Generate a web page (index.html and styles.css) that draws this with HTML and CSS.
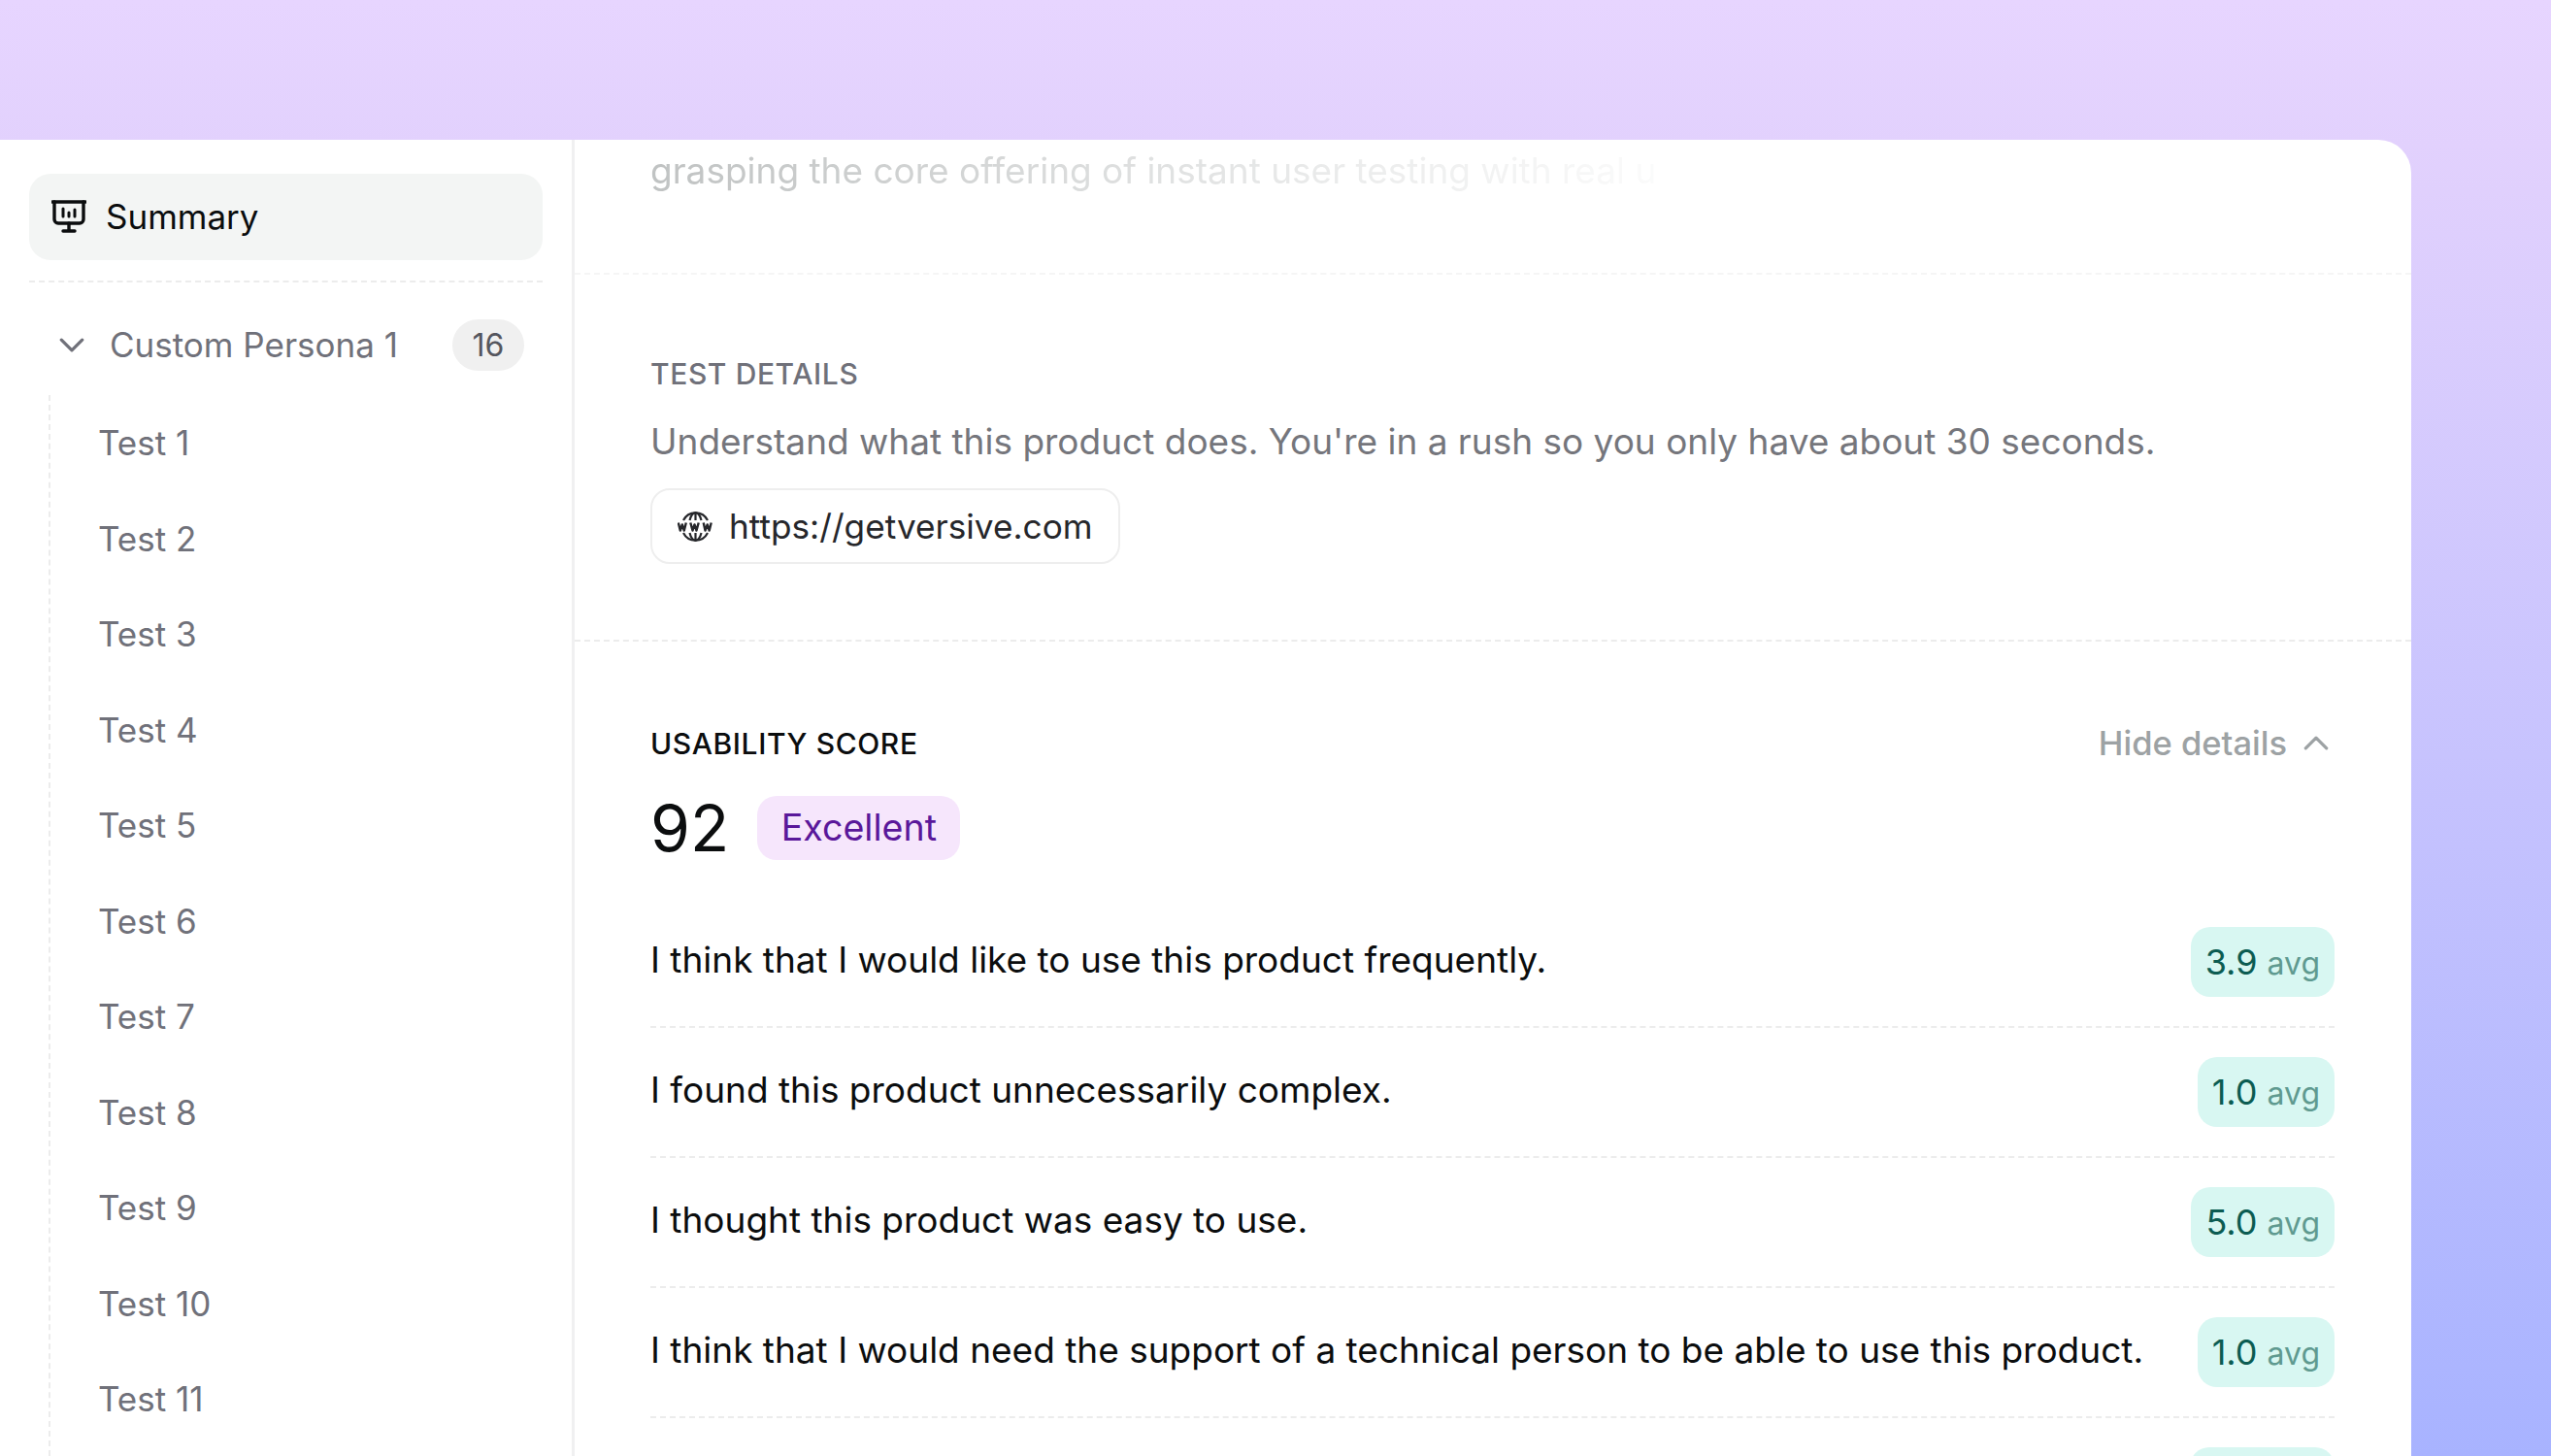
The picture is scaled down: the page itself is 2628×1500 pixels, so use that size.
FILE: index.html
```html
<!DOCTYPE html>
<html lang="en">
<head>
  <meta charset="UTF-8" />
  <meta name="viewport" content="width=device-width, initial-scale=1.0"/>
  <title>Test results</title>
  <link rel="stylesheet" href="styles.css">
</head>
<body>

  <div class="window">
    <aside class="sidebar">
      <div class="summary">
        <svg class="summary-icon" viewBox="0 0 36 36" fill="none" stroke="currentColor" stroke-width="3.4" stroke-linecap="round" stroke-linejoin="round">
          <path d="M1 3h34"/>
          <path d="M3 3v18a4 4 0 0 0 4 4h22a4 4 0 0 0 4-4V3"/>
          <path d="M18 25v7"/>
          <path d="M12 33h12"/>
          <path d="M12 10v8M18 14v4M24 11v7" stroke-width="3"/>
        </svg>
        <span>Summary</span>
      </div>

      <div class="persona">
        <svg class="persona-chevron" viewBox="0 0 24 14" fill="none" stroke="currentColor" stroke-width="3" stroke-linecap="round" stroke-linejoin="round">
          <path d="M2 2l10 10 10-10"/>
        </svg>
        <span class="persona-name">Custom Persona 1</span>
        <span class="persona-count">16</span>
      </div>

      <div class="tests">
        <div class="test">Test 1</div>
        <div class="test">Test 2</div>
        <div class="test">Test 3</div>
        <div class="test">Test 4</div>
        <div class="test">Test 5</div>
        <div class="test">Test 6</div>
        <div class="test">Test 7</div>
        <div class="test">Test 8</div>
        <div class="test">Test 9</div>
        <div class="test">Test 10</div>
        <div class="test">Test 11</div>
      </div>
    </aside>

    <main class="main">
      <section class="intro">
        <p class="intro-text">grasping the core offering of instant user testing with real u</p>
      </section>

      <section class="details">
        <h2 class="label label-muted">TEST DETAILS</h2>
        <p class="details-text">Understand what this product does. You're in a rush so you only have about 30 seconds.</p>
        <div class="url">
          <svg class="url-icon" viewBox="0 0 37 31" fill="none" stroke="currentColor" stroke-width="2.2" stroke-linejoin="round">
            <path d="M6 9a14 14 0 0 1 25 0"/>
            <path d="M12.5 9C13.5 5 16 1.5 18.5 1.2 21 1.5 23.5 5 24.5 9"/>
            <path d="M18.5 1v8"/>
            <path d="M6 22a14 14 0 0 0 25 0"/>
            <path d="M12.5 22c1 4 3.5 7.5 6 7.8 2.5-.3 5-3.8 6-7.8"/>
            <path d="M18.5 22v8"/>
            <path d="M.8 11.5l2 8 2-6 2 6 2-8M13.3 11.5l2.2 8 2-6 2 6 2.2-8M26.7 11.5l1.8 8 2.2-6 2 6 2-8" stroke-width="2.4"/>
          </svg>
          <span>https://getversive.com</span>
        </div>
      </section>

      <section class="score">
        <div class="score-head">
          <h2 class="label">USABILITY SCORE</h2>
          <div class="toggle">
            <span>Hide details</span>
            <svg class="toggle-chevron" viewBox="0 0 24 14" fill="none" stroke="currentColor" stroke-width="3" stroke-linecap="round" stroke-linejoin="round">
              <path d="M2 12l10-10 10 10"/>
            </svg>
          </div>
        </div>

        <div class="score-value">
          <span class="score-number">92</span>
          <span class="score-tag">Excellent</span>
        </div>

        <div class="rows">
          <div class="row">
            <span class="row-text">I think that I would like to use this product frequently.</span>
            <span class="avg"><b>3.9</b> avg</span>
          </div>
          <div class="row">
            <span class="row-text">I found this product unnecessarily complex.</span>
            <span class="avg"><b>1.0</b> avg</span>
          </div>
          <div class="row">
            <span class="row-text">I thought this product was easy to use.</span>
            <span class="avg"><b>5.0</b> avg</span>
          </div>
          <div class="row">
            <span class="row-text">I think that I would need the support of a technical person to be able to use this product.</span>
            <span class="avg"><b>1.0</b> avg</span>
          </div>
          <div class="row">
            <span class="row-text"></span>
            <span class="avg avg-empty"></span>
          </div>
        </div>
      </section>
    </main>
  </div>

</body>
</html>
```

FILE: styles.css
```css
* {
  box-sizing: border-box;
}

html, body {
  height: 100%;
}

body {
  margin: 0;
  padding-top: 144px;
  overflow: hidden;
  background: linear-gradient(180deg, #e7d5ff 0%, #e2d1fd 10%, #a8b3ff 100%);
  font-family: Inter, "Noto Sans", sans-serif;
  color: #0b0d0e;
}

.window {
  display: grid;
  grid-template-columns: 592px 1fr;
  width: 2484px;
  height: 1356px;
  overflow: hidden;
  background: #fff;
  border-top-right-radius: 34px;
}

/* sidebar */

.sidebar {
  display: flex;
  flex-direction: column;
  padding: 35px 30px 0 30px;
  border-right: 3px solid #f0f0f1;
}

.summary {
  display: flex;
  align-items: center;
  gap: 20px;
  flex: none;
  height: 89px;
  padding-left: 23px;
  padding-bottom: 1px;
  background: #f3f5f4;
  border-radius: 22px;
  font-size: 35px;
}

.summary-icon {
  width: 36px;
  height: 36px;
  flex: none;
}

.persona {
  display: flex;
  align-items: center;
  flex: none;
  margin-top: 21px;
  padding: 37px 19px 0 31px;
  border-top: 2px dashed #ececec;
  height: 93px;
  color: #70717a;
  font-size: 35px;
}

.persona-chevron {
  width: 26px;
  height: 15px;
  flex: none;
}

.persona-name {
  flex: 1;
  margin-left: 26px;
}

.persona-count {
  width: 74px;
  height: 53px;
  background: #f0f0f0;
  border-radius: 27px;
  color: #55565e;
  font-size: 32px;
  line-height: 53px;
  text-align: center;
}

.tests {
  flex: 1;
  margin: 25px 0 0 20px;
  padding-left: 49px;
  border-left: 2px dashed #ececec;
}

.test {
  height: 98.5px;
  line-height: 98.5px;
  color: #70717a;
  font-size: 35px;
}

/* main column */

.main {
  overflow: hidden;
}

.intro {
  height: 139px;
  padding: 0 79px 0 78px;
  border-bottom: 2px dashed #f5f5f5;
}

.intro-text {
  margin: 0;
  padding-top: 10px;
  line-height: 44px;
  font-size: 37px;
  color: #b9bcbc;
  -webkit-mask-image: linear-gradient(90deg, rgba(0,0,0,0.9) 0%, rgba(0,0,0,0.3) 40%, rgba(0,0,0,0) 65%);
  mask-image: linear-gradient(90deg, rgba(0,0,0,0.9) 0%, rgba(0,0,0,0.3) 40%, rgba(0,0,0,0) 65%);
}

.details {
  height: 378px;
  padding: 84px 79px 0 78px;
  border-bottom: 2px dashed #ececec;
}

.label {
  margin: 0;
  font-size: 30px;
  font-weight: 500;
  line-height: 36px;
  letter-spacing: 0.6px;
}

.label-muted {
  color: #70717a;
}

.details-text {
  margin: 30px 0 0;
  line-height: 44px;
  font-size: 37px;
  color: #75767c;
}

.url {
  display: inline-flex;
  align-items: center;
  gap: 16px;
  height: 78px;
  margin-top: 26px;
  padding: 0 26px;
  border: 2px solid #eeeeee;
  border-radius: 20px;
  font-size: 35.2px;
  color: #26272b;
}

.url-icon {
  width: 37px;
  height: 31px;
  flex: none;
}

.score {
  padding: 84px 79px 0 78px;
}

.score-head {
  display: flex;
  justify-content: space-between;
  align-items: center;
}

.toggle {
  display: flex;
  align-items: center;
  gap: 17px;
  padding-right: 6px;
  font-size: 34.5px;
  font-weight: 500;
  color: #9da2a4;
}

.toggle-chevron {
  width: 26px;
  height: 15px;
  flex: none;
}

.score-value {
  display: flex;
  align-items: center;
  gap: 29px;
  margin-top: 34px;
}

.score-number {
  font-size: 66px;
  line-height: 66px;
}

.score-tag {
  height: 66px;
  padding: 0 24.5px;
  background: #f6e6fc;
  border-radius: 20px;
  color: #5a189a;
  font-size: 37.6px;
  line-height: 66px;
}

.rows {
  margin-top: 39px;
}

.row {
  display: flex;
  justify-content: space-between;
  align-items: center;
  height: 134px;
  border-bottom: 2px dashed #ececec;
}

.row-text {
  padding-bottom: 6px;
  font-size: 37px;
}

.avg {
  height: 72px;
  padding: 0 15px;
  background: #d8f7f2;
  border-radius: 20px;
  color: #5f9a90;
  font-size: 32px;
  line-height: 72px;
}

.avg b {
  margin-right: 1px;
  color: #0c5c52;
  font-size: 36px;
  font-weight: 400;
}

.avg-empty {
  width: 149px;
}
```
